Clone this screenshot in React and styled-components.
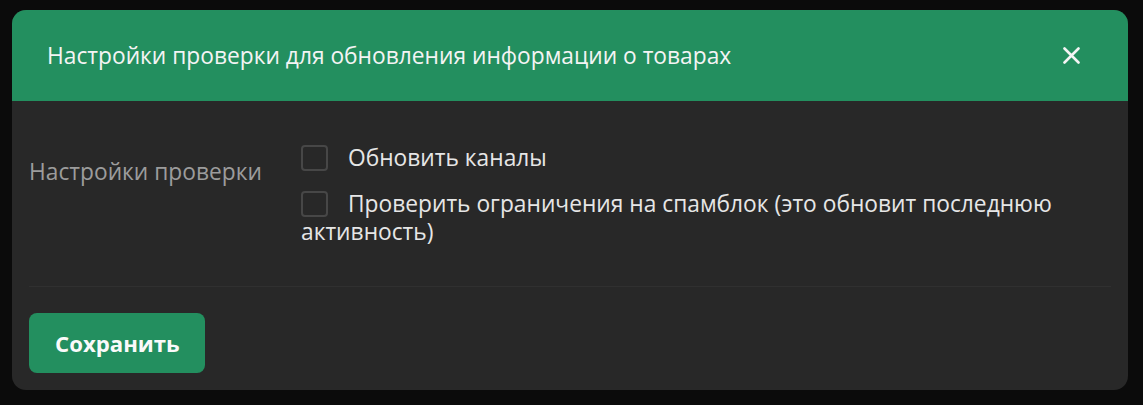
import React from "react";
import styled, { createGlobalStyle } from "styled-components";

const GlobalStyle = createGlobalStyle`
  html, body {
    margin: 0;
    padding: 0;
    background: #0b0b0b;
    font-family: "Open Sans", "Liberation Sans", sans-serif;
  }
`;

const green = "#238f5f";

const Page = styled.div`
  padding: 10px 15px 16px 12px;
`;

const Modal = styled.div`
  background: #282828;
  border-radius: 14px;
  overflow: hidden;
`;

const Header = styled.div`
  display: flex;
  align-items: center;
  justify-content: space-between;
  height: 91px;
  padding: 0 48px 0 35px;
  background: ${green};
`;

const Title = styled.h2`
  margin: 0;
  font-size: 22.75px;
  font-weight: 400;
  color: #f4f4f4;
`;

const Close = styled.button`
  display: flex;
  align-items: center;
  justify-content: center;
  width: 18px;
  height: 18px;
  padding: 0;
  border: none;
  background: none;
  cursor: pointer;
`;

const Body = styled.div`
  padding: 0 17px 17px 17px;
`;

const Row = styled.div`
  display: grid;
  grid-template-columns: 272px 1fr;
  align-items: start;
  padding: 43px 0 40px;
  border-bottom: 1px solid #303030;
`;

const Label = styled.div`
  margin-top: 14px;
  font-size: 22.75px;
  line-height: 28px;
  color: #9c9c9c;
`;

const Options = styled.div`
  display: flex;
  flex-direction: column;
  gap: 18px;
`;

const Option = styled.label`
  font-size: 22.75px;
  line-height: 28px;
  color: #e6e6e6;
  cursor: pointer;
`;

const Box = styled.input.attrs({ type: "checkbox" })`
  appearance: none;
  display: inline-block;
  vertical-align: -5px;
  width: 27px;
  height: 26px;
  margin: 0 20px 0 0;
  border: 2px solid #474747;
  border-radius: 4px;
  background: #282828;
  box-sizing: border-box;
`;

const Footer = styled.div`
  padding-top: 26px;
`;

const SaveButton = styled.button`
  height: 60px;
  padding: 0 25px 0 26px;
  border: none;
  border-radius: 8px;
  background: ${green};
  color: #fafafa;
  font-family: inherit;
  font-size: 22.2px;
  font-weight: 700;
  cursor: pointer;
`;

export default function App() {
  return (
    <>
      <GlobalStyle />
      <Page>
        <Modal>
          <Header>
            <Title>Настройки проверки для обновления информации о товарах</Title>
            <Close aria-label="close">
              <svg width="17" height="17" viewBox="0 0 17 17">
                <path d="M1.5 1.5L15.5 15.5M15.5 1.5L1.5 15.5" stroke="#f4f4f4" strokeWidth="2.6" strokeLinecap="round" />
              </svg>
            </Close>
          </Header>
          <Body>
            <Row>
              <Label>Настройки проверки</Label>
              <Options>
                <Option>
                  <Box />
                  Обновить каналы
                </Option>
                <Option>
                  <Box />
                  Проверить ограничения на спамблок (это обновит последнюю активность)
                </Option>
              </Options>
            </Row>
            <Footer>
              <SaveButton>Сохранить</SaveButton>
            </Footer>
          </Body>
        </Modal>
      </Page>
    </>
  );
}
